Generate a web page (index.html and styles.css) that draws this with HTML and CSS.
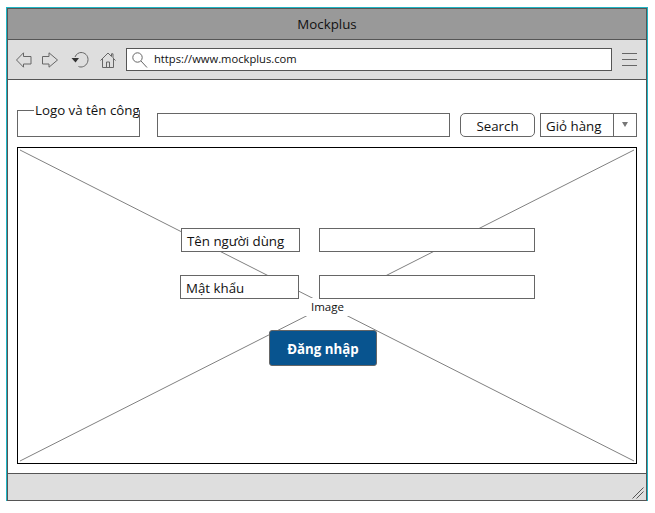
FILE: index.html
```html
<!DOCTYPE html>
<html lang="vi">
<head>
  <meta charset="UTF-8" />
  <title>Mockplus</title>
  <link rel="stylesheet" href="styles.css">
</head>
<body>

  <div class="browser">
    <div class="title-bar">Mockplus</div>

    <div class="tool-bar">
      <svg class="icon icon-back" width="16" height="16" viewBox="0 0 16 16">
        <path d="M0.5 8 L7.5 0.8 V4.5 H15 V12 H7.5 V15.2 Z" />
      </svg>
      <svg class="icon icon-forward" width="16" height="16" viewBox="0 0 16 16">
        <path d="M15.5 8 L7 0.8 V4.5 H0.5 V12 H7 V15.2 Z" />
      </svg>
      <svg class="icon icon-undo" width="18" height="17" viewBox="0 0 18 17">
        <path d="M4 6 C5 3 8 1.5 10 1.5 C14 1.5 17 4.5 17 8.5 C17 13 13.5 16 10 16 C9 16 8 15.8 7.5 15.5" />
        <path class="icon-solid" d="M0.5 7 H8 L4.5 11.5 Z" />
      </svg>
      <svg class="icon icon-home" width="16" height="16" viewBox="0 0 16 16">
        <path d="M0.5 8.5 L8 1 L11.5 4.5 V1.8 H13 V6 L15.5 8.5 M2.5 7 V15.5 H13.5 V7 M6.5 15.5 V10 H9.5 V15.5" />
      </svg>
      <div class="url-box">
        <svg class="icon icon-search" width="16" height="16" viewBox="0 0 16 16">
          <circle cx="5.5" cy="5.5" r="4.7" />
          <path d="M9 9 L15 15.5" />
        </svg>
        <span class="url-text">https://www.mockplus.com</span>
      </div>
      <div class="menu-icon"><span></span><span></span><span></span></div>
    </div>

    <div class="content">
      <div class="top-row">
        <div class="logo-box"><span class="logo-text">Logo và tên công ty</span></div>
        <div class="search-input"></div>
        <div class="search-btn">Search</div>
        <div class="cart-select">
          <span class="cart-label">Giỏ hàng</span>
          <span class="cart-arrow"></span>
        </div>
      </div>

      <div class="image-box">
        <svg class="image-lines" width="100%" height="100%" viewBox="0 0 618 315" preserveAspectRatio="none">
          <line x1="2" y1="2" x2="616" y2="313" />
          <line x1="616" y1="2" x2="2" y2="313" />
        </svg>
        <span class="image-label">Image</span>

        <form class="login-form">
          <div class="form-row">
            <div class="field-label">Tên người dùng</div>
            <div class="field-input"></div>
          </div>
          <div class="form-row">
            <div class="field-label field-label-left">Mật khẩu</div>
            <div class="field-input"></div>
          </div>
          <button type="button" class="login-btn">Đăng nhập</button>
        </form>
      </div>
    </div>

    <div class="status-bar">
      <svg class="grip" width="12" height="12" viewBox="0 0 12 12">
        <path d="M0.5 11.5 L11.5 0.5 M4.5 11.5 L11.5 4.5" />
      </svg>
    </div>
  </div>

</body>
</html>
```

FILE: styles.css
```css
body {
  margin: 0;
  font-family: "Open Sans", "Noto Sans", Arial, sans-serif;
  color: #111;
  background-color: #fff;
}

.browser {
  display: flex;
  flex-direction: column;
  box-sizing: border-box;
  width: 640px;
  height: 493px;
  margin: 8px 0 0 7px;
  border: 1px solid #555;
  outline: 1px solid #1fb5c4;
}

.title-bar {
  box-sizing: border-box;
  height: 31px;
  line-height: 31px;
  text-align: center;
  font-size: 13.3px;
  background-color: #999;
  border-bottom: 1px solid #555;
}

.tool-bar {
  display: flex;
  align-items: center;
  box-sizing: border-box;
  height: 40px;
  padding: 0 9px 0 8px;
  background-color: #dedede;
  border-bottom: 1px solid #555;
}

.icon {
  flex: none;
  fill: none;
  stroke: #666;
  stroke-width: 1;
}

.icon-solid {
  fill: #333;
  stroke: none;
}

.icon-forward {
  margin-left: 10px;
}

.icon-undo {
  margin-left: 13px;
}

.icon-home {
  margin-left: 11px;
}

.url-box {
  display: flex;
  align-items: center;
  flex: 1;
  box-sizing: border-box;
  height: 23px;
  margin: 0 10px;
  padding-left: 5px;
  background-color: #fff;
  border: 1px solid #555;
}

.url-text {
  margin: 0 0 2px 6px;
  font-size: 11.2px;
}

.menu-icon {
  display: flex;
  flex-direction: column;
  gap: 5px;
  width: 15px;
}

.menu-icon span {
  height: 1px;
  background-color: #666;
}

.content {
  display: flex;
  flex-direction: column;
  box-sizing: border-box;
  height: 394px;
  padding: 33px 9px 9px;
  background-color: #fff;
  border-bottom: 1px solid #555;
}

.top-row {
  display: flex;
  align-items: flex-end;
  height: 24px;
  margin-bottom: 10px;
}

.logo-box {
  position: relative;
  box-sizing: border-box;
  width: 123px;
  height: 27px;
  border: 1px solid #666;
  border-top: none;
}

.logo-box::before {
  content: "";
  position: absolute;
  top: 0;
  left: -1px;
  width: 17px;
  height: 1px;
  background-color: #666;
}

.logo-text {
  position: absolute;
  top: -9px;
  left: 17px;
  width: 104px;
  height: 18px;
  overflow: hidden;
  line-height: 18px;
  font-size: 13.3px;
  white-space: nowrap;
  background-color: #fff;
}

.search-input {
  box-sizing: border-box;
  width: 293px;
  height: 24px;
  margin-left: 17px;
  border: 1px solid #666;
}

.search-btn {
  box-sizing: border-box;
  width: 75px;
  height: 24px;
  margin-left: 10px;
  line-height: 24px;
  text-align: center;
  font-size: 13.3px;
  border: 1px solid #666;
  border-radius: 5px;
}

.cart-select {
  display: flex;
  box-sizing: border-box;
  width: 97px;
  height: 24px;
  margin-left: 5px;
  border: 1px solid #666;
}

.cart-label {
  flex: 1;
  padding-left: 5px;
  line-height: 24px;
  font-size: 13.3px;
  border-right: 1px solid #666;
}

.cart-arrow {
  position: relative;
  width: 22px;
}

.cart-arrow::after {
  content: "";
  position: absolute;
  top: 8px;
  left: 8px;
  border-top: 5px solid #777;
  border-left: 3.5px solid transparent;
  border-right: 3.5px solid transparent;
}

.image-box {
  position: relative;
  box-sizing: border-box;
  height: 317px;
  border: 1px solid #000;
}

.image-lines {
  position: absolute;
  top: 0;
  left: 0;
  stroke: #808080;
  stroke-width: 1;
}

.image-label {
  position: absolute;
  top: 150px;
  left: 287px;
  padding: 0 6px;
  line-height: 18px;
  font-size: 11.5px;
  background-color: #fff;
}

.login-form {
  position: absolute;
  top: 80px;
  left: 163px;
  display: flex;
  flex-direction: column;
  gap: 23px;
}

.form-row {
  display: flex;
  gap: 19px;
}

.field-label {
  box-sizing: border-box;
  width: 119px;
  height: 24px;
  padding-left: 5px;
  line-height: 24px;
  font-size: 13.3px;
  background-color: #fff;
  border: 1px solid #666;
}

.field-label-left {
  margin: 0 1px 0 -1px;
}

.field-input {
  box-sizing: border-box;
  width: 216px;
  height: 24px;
  background-color: #fff;
  border: 1px solid #666;
}

.login-btn {
  box-sizing: border-box;
  width: 108px;
  height: 36px;
  margin: 8px 0 0 88px;
  padding: 1px 0 0;
  font-family: inherit;
  font-size: 13.3px;
  font-weight: bold;
  color: #fff;
  background-color: #08548f;
  border: 1px solid #666;
  border-radius: 3px;
}

.status-bar {
  display: flex;
  justify-content: flex-end;
  align-items: flex-end;
  flex: 1;
  padding: 0 2px 1px 0;
  background-color: #dedede;
}

.grip {
  fill: none;
  stroke: #555;
  stroke-width: 1;
}
```
